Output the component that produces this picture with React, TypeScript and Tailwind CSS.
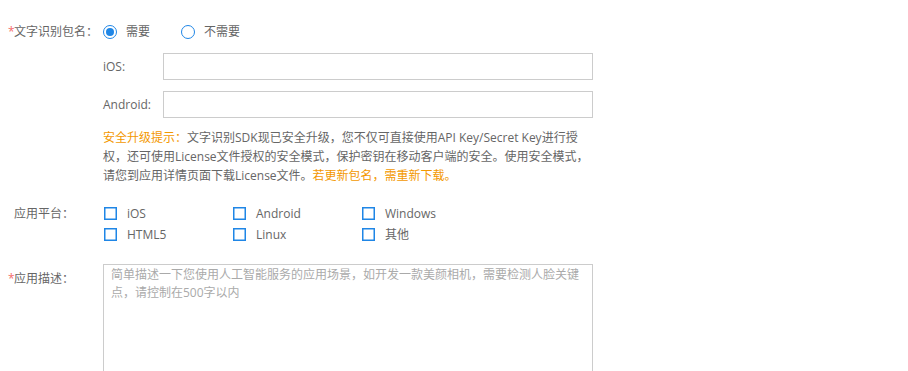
import { useState } from "react";

const font = { fontFamily: '"Open Sans", "Noto Sans CJK SC", sans-serif' };

function Label({ text, required }: { text: string; required?: boolean }) {
  return (
    <div className="w-[95px] shrink-0 flex items-center">
      <span className="w-[6px] text-[#f56c6c]">{required ? "*" : ""}</span>
      <span>{text}</span>
    </div>
  );
}

function Radio({ checked, label, onClick }: { checked: boolean; label: string; onClick: () => void }) {
  return (
    <button onClick={onClick} className="flex items-center gap-[9px] text-[#666]">
      <span className="w-[14px] h-[14px] rounded-full border border-[#1f86e6] flex items-center justify-center">
        {checked && <span className="w-[8px] h-[8px] rounded-full bg-[#1f86e6]" />}
      </span>
      <span>{label}</span>
    </button>
  );
}

function Check({ label }: { label: string }) {
  const [on, setOn] = useState(false);
  return (
    <button onClick={() => setOn(!on)} className="w-[129px] flex items-center gap-[10px] h-[21px] text-[#666]">
      <span className="w-[13px] h-[13px] ml-[1px] shadow-[inset_0_0_0_1.5px_#1f86e6] flex items-center justify-center">
        {on && <span className="w-[7px] h-[7px] bg-[#1f86e6]" />}
      </span>
      <span>{label}</span>
    </button>
  );
}

export default function App() {
  const [need, setNeed] = useState(true);

  return (
    <div className="min-h-screen bg-white pt-[22px] pl-[8px] text-[12px] text-[#666]" style={font}>
      <div className="flex items-center h-[20px]">
        <Label text="文字识别包名：" required />
        <div className="flex items-center gap-[31px]">
          <Radio checked={need} label="需要" onClick={() => setNeed(true)} />
          <Radio checked={!need} label="不需要" onClick={() => setNeed(false)} />
        </div>
      </div>

      <div className="ml-[95px] w-[490px]">
        <div className="flex items-center mt-[11px]">
          <span className="w-[60px]">iOS:</span>
          <input className="w-[430px] h-[27px] border border-[#ccc] outline-none px-2" />
        </div>
        <div className="flex items-center mt-[11px]">
          <span className="w-[60px]">Android:</span>
          <input className="w-[430px] h-[27px] border border-[#ccc] outline-none px-2" />
        </div>
        <p className="mt-[10px] leading-[19px]">
          <span className="text-[#f39800]">安全升级提示：</span>
          文字识别SDK现已安全升级，您不仅可直接使用API Key/Secret Key进行授权，还可使用License文件授权的安全模式，保护密钥在移动客户端的安全。使用安全模式，请您到应用详情页面下载License文件。
          <span className="text-[#f39800]">若更新包名，需重新下载。</span>
        </p>
      </div>

      <div className="flex mt-[18px]">
        <div className="h-[21px] flex items-center">
          <Label text="应用平台：" />
        </div>
        <div className="grid grid-cols-[129px_129px_129px]">
          <Check label="iOS" />
          <Check label="Android" />
          <Check label="Windows" />
          <Check label="HTML5" />
          <Check label="Linux" />
          <Check label="其他" />
        </div>
      </div>

      <div className="flex mt-[19px]">
        <div className="pt-[6px]">
          <Label text="应用描述：" required />
        </div>
        <textarea
          className="w-[490px] h-[130px] border border-[#ccc] outline-none px-[7px] py-[1px] leading-[18px] resize-none placeholder:text-[#aaa]"
          placeholder="简单描述一下您使用人工智能服务的应用场景，如开发一款美颜相机，需要检测人脸关键点，请控制在500字以内"
        />
      </div>
    </div>
  );
}
